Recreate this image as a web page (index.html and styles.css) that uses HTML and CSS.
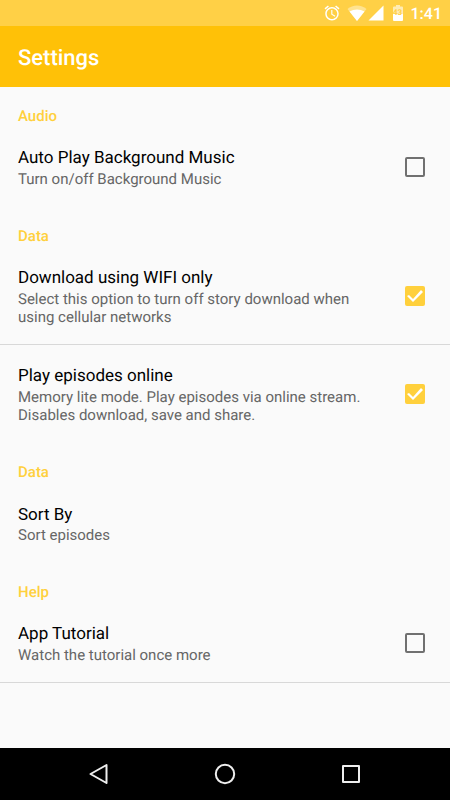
FILE: index.html
```html
<!DOCTYPE html>
<html lang="en">
<head>
  <meta charset="UTF-8" />
  <meta name="viewport" content="width=device-width, initial-scale=1.0" />
  <title>Settings</title>
  <link rel="stylesheet" href="styles.css">
</head>
<body>
  <div class="status-bar">
    <svg class="alarm" width="18" height="18" viewBox="0 0 24 24" aria-hidden="true">
      <path d="M22 5.72l-4.6-3.86-1.29 1.53 4.6 3.86L22 5.72zM7.88 3.39L6.6 1.86 2 5.71l1.29 1.53 4.59-3.85zM12.5 8H11v6l4.75 2.85.75-1.23-4-2.37V8zM12 4c-4.97 0-9 4.03-9 9s4.02 9 9 9a9 9 0 0 0 0-18zm0 16c-3.87 0-7-3.13-7-7s3.13-7 7-7 7 3.13 7 7-3.13 7-7 7z" />
    </svg>
    <svg class="wifi" width="20" height="16" viewBox="0 0 20 16" aria-hidden="true">
      <path class="faded" d="M10 16L0.500 4Q4.500 0.500 10 0.500T19.500 4Z" />
      <path d="M10 16L2.500 6.500Q6 4.500 10 4.500T17.500 6.500Z" />
    </svg>
    <svg class="signal" width="16" height="16" viewBox="0 0 16 16" aria-hidden="true">
      <path d="M0.500 15.500H15.500V0.500Z" />
    </svg>
    <span class="battery">
      <svg width="10" height="16" viewBox="0 0 10 16" aria-hidden="true">
        <path class="faded" d="M3 0H7V1.500H9Q10 1.500 10 2.500V9H0V2.500Q0 1.500 1 1.500H3Z" />
        <path d="M0 9H10V15Q10 16 9 16H1Q0 16 0 15Z" />
      </svg>
      <span class="battery-level">43</span>
    </span>
    <time class="clock">1:41</time>
  </div>

  <header class="toolbar">
    <h1>Settings</h1>
  </header>

  <main class="settings">
    <section class="group">
      <h2>Audio</h2>
      <label class="item">
        <span class="item-text">
          <span class="item-title">Auto Play Background Music</span>
          <span class="item-summary">Turn on/off Background Music</span>
        </span>
        <input type="checkbox" class="checkbox" />
      </label>
    </section>

    <section class="group">
      <h2>Data</h2>
      <label class="item divided">
        <span class="item-text">
          <span class="item-title">Download using WIFI only</span>
          <span class="item-summary">Select this option to turn off story download when using cellular networks</span>
        </span>
        <input type="checkbox" class="checkbox" checked />
      </label>
      <label class="item">
        <span class="item-text">
          <span class="item-title">Play episodes online</span>
          <span class="item-summary">Memory lite mode. Play episodes via online stream. Disables download, save and share.</span>
        </span>
        <input type="checkbox" class="checkbox" checked />
      </label>
    </section>

    <section class="group">
      <h2>Data</h2>
      <button type="button" class="item">
        <span class="item-text">
          <span class="item-title">Sort By</span>
          <span class="item-summary">Sort episodes</span>
        </span>
      </button>
    </section>

    <section class="group">
      <h2>Help</h2>
      <label class="item divided">
        <span class="item-text">
          <span class="item-title">App Tutorial</span>
          <span class="item-summary">Watch the tutorial once more</span>
        </span>
        <input type="checkbox" class="checkbox" />
      </label>
    </section>
  </main>

  <nav class="nav-bar">
    <button type="button" aria-label="Back">
      <svg width="24" height="24" viewBox="0 0 24 24"><path d="M19.500 3L3.500 12L19.500 21Z" /></svg>
    </button>
    <button type="button" aria-label="Home">
      <svg width="24" height="24" viewBox="0 0 24 24"><circle cx="12" cy="12" r="9.200" /></svg>
    </button>
    <button type="button" aria-label="Recent apps">
      <svg width="24" height="24" viewBox="0 0 24 24"><rect x="4" y="4" width="16" height="16" /></svg>
    </button>
  </nav>
</body>
</html>
```

FILE: styles.css
```css
* {
  box-sizing: border-box;
}

body {
  display: flex;
  flex-direction: column;
  min-height: 100vh;
  margin: 0;
  font-family: Roboto, sans-serif;
  text-rendering: geometricPrecision;
  background: #fafafa;
  color: #000;
}

h1,
h2 {
  margin: 0;
  font-weight: 500;
}

button {
  border: 0;
  background: none;
  font: inherit;
  color: inherit;
  cursor: pointer;
}

/* STATUS BAR */
.status-bar {
  display: flex;
  align-items: center;
  justify-content: flex-end;
  height: 26px;
  padding-right: 8px;
  background: #ffd046;
  color: #fff;
}

.status-bar svg {
  display: block;
  fill: currentColor;
}

.status-bar .faded {
  fill-opacity: 0.4;
}

.battery .faded {
  fill-opacity: 0.6;
}

.alarm {
  margin-right: 6px;
}

.wifi {
  margin-right: 1px;
}

.signal {
  margin-right: 9px;
}

.battery {
  position: relative;
  margin-right: 8px;
}

.battery-level {
  position: absolute;
  inset: 3px 0 0;
  font-size: 8px;
  font-weight: 700;
  line-height: 9px;
  text-align: center;
  color: #ffd046;
}

.clock {
  font-size: 16px;
  font-weight: 500;
}

/* TOOLBAR */
.toolbar {
  display: flex;
  align-items: center;
  height: 61px;
  padding: 4px 18px 0;
  background: #ffc107;
  color: #fff;
}

.toolbar h1 {
  font-size: 22px;
  line-height: 26px;
}

/* SETTINGS LIST */
.settings {
  flex: 1;
}

.group + .group {
  padding-top: 1px;
}

.group h2 {
  padding: 19px 18px 1px;
  font-size: 15px;
  line-height: 20px;
  color: #ffd03c;
}

.item {
  display: flex;
  align-items: center;
  justify-content: space-between;
  gap: 24px;
  width: 100%;
  padding: 19px 25px 18px 18px;
  text-align: left;
  cursor: pointer;
}

.divided {
  border-bottom: 1px solid #d8d8d8;
}

.item-text {
  display: flex;
  flex-direction: column;
}

.item-title {
  font-size: 17px;
  line-height: 24px;
}

.item-summary {
  font-size: 15px;
  line-height: 18px;
  color: #666;
}

.checkbox {
  display: grid;
  place-items: center;
  flex: none;
  appearance: none;
  width: 20px;
  height: 20px;
  margin: 0;
  border: 2px solid #707070;
  border-radius: 2px;
  cursor: pointer;
}

.checkbox:checked {
  border-color: #ffd03c;
  background: #ffd03c;
}

.checkbox:checked::before {
  content: "";
  width: 16px;
  height: 12px;
  background: #fff;
  clip-path: polygon(0 6px, 2px 5px, 6px 9px, 14px 0, 16px 2px, 6px 12px);
}

/* NAVIGATION BAR */
.nav-bar {
  display: flex;
  justify-content: center;
  height: 52px;
  background: #000;
}

.nav-bar button {
  display: grid;
  place-items: center;
  width: 28%;
  padding: 0;
}

.nav-bar svg {
  fill: none;
  stroke: #eee;
  stroke-width: 2;
  stroke-linejoin: round;
}
```
